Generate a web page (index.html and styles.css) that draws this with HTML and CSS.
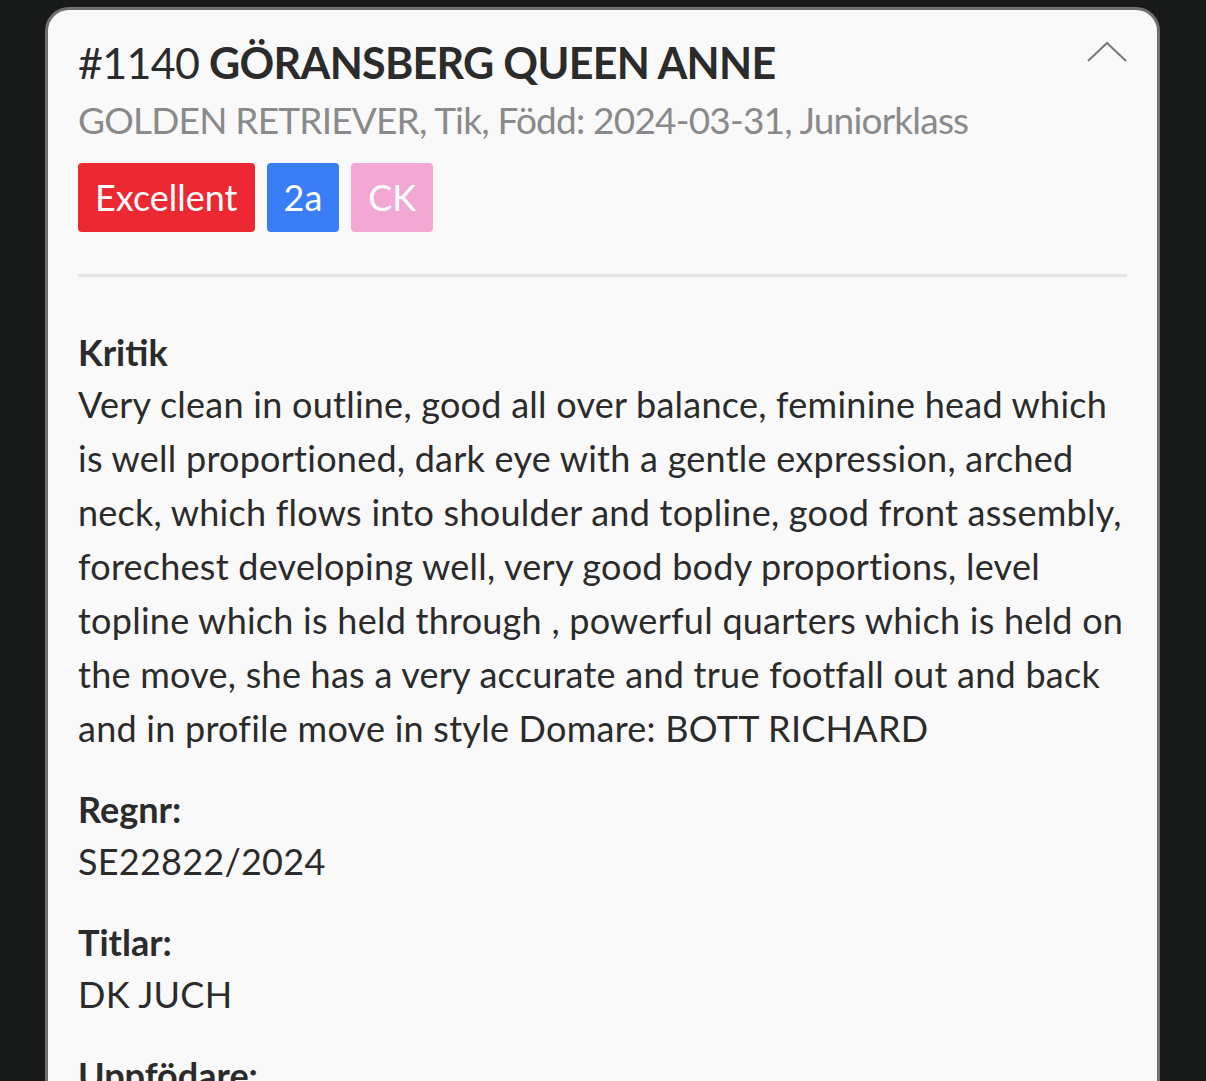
FILE: index.html
```html
<!DOCTYPE html>
<html lang="sv">
<head>
    <meta charset="UTF-8">
    <meta name="viewport" content="width=device-width, initial-scale=1.0">
    <title>Resultat</title>
    <link rel="stylesheet" href="styles.css">
</head>
<body>
    <div class="card">
        <div class="card-header">
            <div class="header-text">
                <h1 class="dog-title"><span class="cat-no">#1140</span> GÖRANSBERG QUEEN ANNE</h1>
                <div class="dog-meta">GOLDEN RETRIEVER, Tik, Född: 2024-03-31, Juniorklass</div>
            </div>
            <button class="toggle-btn" aria-label="Fäll ihop">
                <svg width="40" height="22" viewBox="0 0 40 22">
                    <polyline points="1,20 20,2 39,20" fill="none" stroke="#7a7a7a" stroke-width="2"/>
                </svg>
            </button>
        </div>

        <div class="badges">
            <span class="badge badge-red">Excellent</span>
            <span class="badge badge-blue">2a</span>
            <span class="badge badge-pink">CK</span>
        </div>

        <hr class="divider">

        <div class="section">
            <h2>Kritik</h2>
            <p>Very clean in outline, good all over balance, feminine head which is well proportioned, dark eye with a gentle expression, arched neck, which flows into shoulder and topline, good front assembly, forechest developing well, very good body proportions, level topline which is held through , powerful quarters which is held on the move, she has a very accurate and true footfall out and back and in profile move in style Domare: BOTT RICHARD</p>
        </div>

        <div class="section">
            <h2>Regnr:</h2>
            <p>SE22822/2024</p>
        </div>

        <div class="section">
            <h2>Titlar:</h2>
            <p>DK JUCH</p>
        </div>

        <div class="section">
            <h2>Uppfödare:</h2>
            <p>Göransberg Kennel</p>
        </div>
    </div>
</body>
</html>
```

FILE: styles.css
```css
body {
    font-family: Lato, "Noto Sans", sans-serif;
    background-color: #181a19;
    margin: 0;
    padding: 7px 0 0 0;
    color: #2b2b2b;
}

.card {
    margin: 0 45px 0 45px;
    width: 1115px;
    box-sizing: border-box;
    padding: 25px 30px 40px 30px;
    background-color: #f9f9f9;
    border: 3px solid #6f6f6f;
    border-radius: 24px;
}

.card-header {
    display: flex;
    justify-content: space-between;
    align-items: flex-start;
}

.dog-title {
    margin: 0;
    font-size: 43px;
    line-height: 56px;
    font-weight: bold;
    letter-spacing: -0.7px;
    color: #2b2b2b;
}

.cat-no {
    font-weight: normal;
}

.dog-meta {
    font-size: 37px;
    line-height: 58px;
    letter-spacing: -0.8px;
    color: #8a8a8a;
}

.toggle-btn {
    background: none;
    border: none;
    padding: 0;
    margin-top: 6px;
    cursor: pointer;
}

.badges {
    display: flex;
    gap: 12px;
    margin-top: 14px;
}

.badge {
    display: inline-block;
    height: 69px;
    line-height: 69px;
    padding: 0 17px;
    font-size: 36px;
    color: #fff;
    border-radius: 4px;
}

.badge-red {
    background-color: #ec2832;
}

.badge-blue {
    background-color: #3a7ef7;
}

.badge-pink {
    background-color: #f3a8d3;
}

.divider {
    border: none;
    height: 3px;
    background-color: #e3e4e6;
    margin: 42px 0 50px 0;
}

.section {
    margin-bottom: 29px;
}

.section h2 {
    margin: 0;
    font-size: 36px;
    line-height: 50px;
    font-weight: bold;
}

.section p {
    margin: 0;
    font-size: 36px;
    line-height: 54px;
    letter-spacing: 0.25px;
}
```
